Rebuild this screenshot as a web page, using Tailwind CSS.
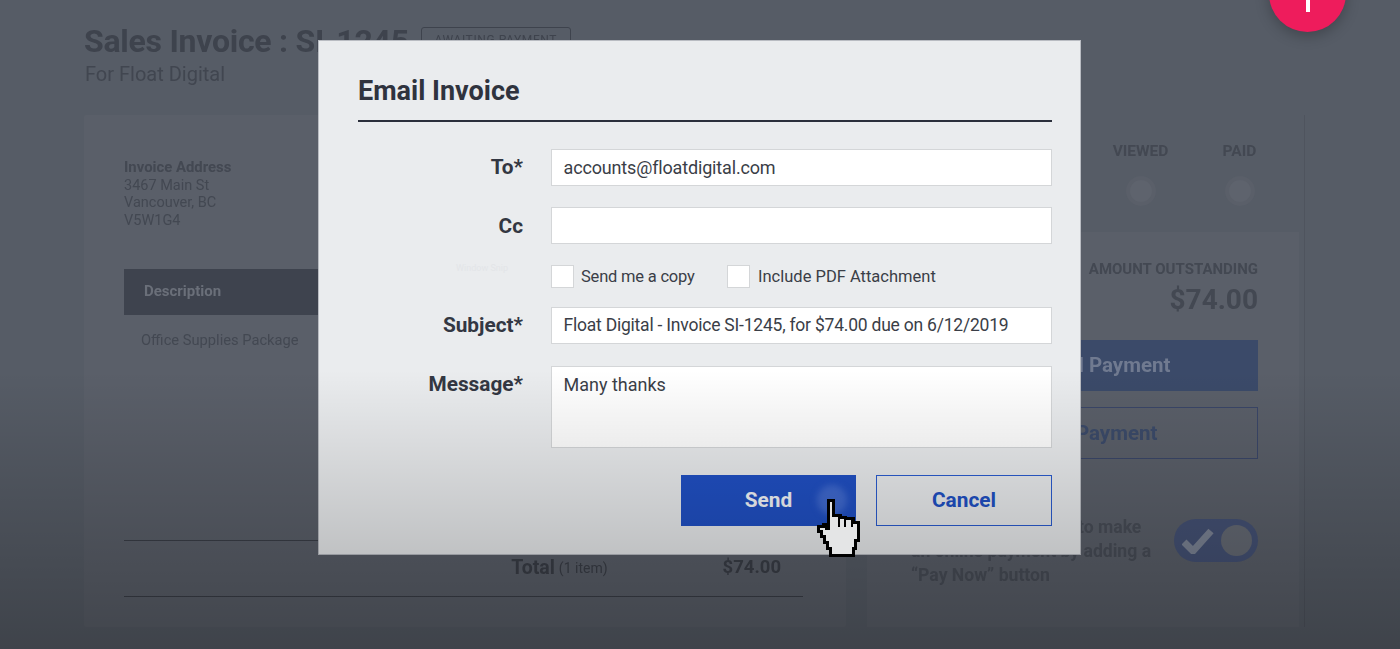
<!doctype html>
<html lang="en">
<head>
<meta charset="utf-8">
<title>Email Invoice</title>
<script src="https://cdn.jsdelivr.net/npm/@tailwindcss/browser@4"></script>
</head>
<body class="m-0">
<div class="relative w-[1400px] h-[649px] overflow-hidden bg-[#565c66] font-['Roboto',sans-serif]">

  <!-- Page behind the dialog -->
  <div class="h-full flex flex-col pl-[84px] blur-[0.5px]">
    <div class="h-[115px] pt-[23px]">
      <div class="flex items-start">
        <h1 class="text-[32px] leading-[36px] font-bold text-[#3e434d] tracking-[-0.26px]">Sales Invoice : SI-1245</h1>
        <span class="ml-[12px] mt-[4px] w-[150px] h-[26px] rounded-[3px] border border-[#3e434d] text-[12px] leading-[24px] text-center tracking-[0.6px] text-[#3e434d]">AWAITING PAYMENT</span>
      </div>
      <p class="text-[20px] leading-[24px] text-[#414650] ml-[1px] mt-[3px]">For Float Digital</p>
    </div>
    <div class="flex h-[512px]">
      <!-- Invoice card -->
      <section class="w-[762px] h-full flex flex-col bg-[#5a5f69] pl-[40px] pr-[43px] pb-[30px] rounded-[2px]">
        <div class="pt-[44px] text-[14.5px] leading-[17.5px] text-[#434852]">
          <p class="font-bold text-[14.9px]">Invoice Address</p>
          <p>3467 Main St</p>
          <p>Vancouver, BC</p>
          <p>V5W1G4</p>
        </div>
        <div class="mt-[40px] h-[46px] bg-[#3e434e] px-[20px] pb-[2px] flex items-center text-[15px] font-bold text-[#6a6f79]">Description</div>
        <p class="mt-[15px] ml-[17px] text-[14.7px] leading-[20px] text-[#434852]">Office Supplies Package</p>
        <div class="mt-auto border-t border-[#3a3e47] h-[56px] pb-[2px] flex items-center justify-end pr-[22px] text-[#3a3e47]">
          <span class="text-[19.5px] font-bold">Total</span>
          <span class="text-[14px] ml-[4px] mt-[2px]">(1 item)</span>
          <span class="ml-[115px] text-[18.5px] font-bold">$74.00</span>
        </div>
        <div class="border-t border-[#3a3e47]"></div>
      </section>

      <!-- Status and payment card -->
      <section class="ml-[21px] w-[438px] h-full flex flex-col border-r border-[#4f545e]">
        <div class="h-[117px] flex justify-end pr-[15px] pt-[28px]">
          <div class="w-[99px] flex flex-col items-center text-[15.5px] leading-[16px] font-bold text-[#434852]">
            <span>VIEWED</span>
            <span class="mt-[17px] w-[30px] h-[30px] rounded-full border-[4px] border-[#5a5f69] bg-[#5e636d]"></span>
          </div>
          <div class="w-[99px] flex flex-col items-center text-[15.5px] leading-[16px] font-bold text-[#434852]">
            <span>PAID</span>
            <span class="mt-[17px] w-[30px] h-[30px] rounded-full border-[4px] border-[#5a5f69] bg-[#5e636d]"></span>
          </div>
        </div>
        <div class="flex-1 mr-[5px] bg-[#5a5f69] pl-[44px] pr-[41px] pt-[27px]">
          <div class="text-right text-[#434852]">
            <p class="text-[15px] leading-[20px] font-bold">AMOUNT OUTSTANDING</p>
            <p class="text-[28px] leading-[40px] font-bold mt-[1px]">$74.00</p>
          </div>
          <div class="mt-[20px] h-[51px] bg-[#3b4a69] pl-[10px] flex items-center justify-center text-[20.5px] font-bold text-[#707a90]">Add Full Payment</div>
          <div class="mt-[16px] h-[52px] border border-[#3a4668] pr-[6px] flex items-center justify-center text-[20.5px] font-bold text-[#3b4a69]">Record Payment</div>
          <div class="mt-[56px] flex items-start justify-between">
            <p class="whitespace-nowrap text-[17.6px] leading-[24px] font-bold text-[#484d57]">Allow your customer to make<br>an online payment by adding a<br>“Pay Now” button</p>
            <span class="mt-[4px] w-[84px] h-[43px] rounded-full bg-[#445174] flex items-center justify-between pl-[8px] pr-[6px]">
              <svg width="32" height="26" viewBox="0 0 32 26" fill="none"><path d="M2 14 L11 23 L29 3" stroke="#7b8394" stroke-width="7"/></svg>
              <span class="w-[31px] h-[31px] rounded-full bg-[#646973]"></span>
            </span>
          </div>
        </div>
      </section>
    </div>
  </div>

  <!-- Floating action button -->
  <div class="absolute left-[1269px] top-[-45px] w-[77px] h-[77px] rounded-full bg-[#ee1c5c] shadow-[0_4px_14px_rgba(0,0,0,0.25)] flex items-end justify-center pb-[20px]">
    <span class="w-[4px] h-[14px] bg-white"></span>
  </div>

  <!-- Email dialog -->
  <div class="absolute left-[318px] top-[40px] w-[763px] h-[515px] bg-[#eaecee] border border-[#b9bcc2] pl-[40px] pr-[28px] text-[#3a3e47]">
    <h2 class="h-[81px] pt-[32px] text-[27px] leading-[36px] font-bold text-[#2f333e] border-b-2 border-[#2b2f3b] -ml-[1px]">Email Invoice</h2>

    <div class="mt-[27px] grid grid-cols-[164px_501px] gap-x-[28px]">
      <label class="h-[37px] text-right text-[20.8px] leading-[37px] font-bold text-[#333742]">To*</label>
      <div class="h-[37px] bg-white border border-[#d4d6d8] pl-[11.5px] text-[18px] tracking-[-0.16px] leading-[35px]">accounts@floatdigital.com</div>

      <label class="mt-[21px] h-[37px] text-right text-[20.8px] leading-[39px] font-bold text-[#333742]">Cc</label>
      <div class="mt-[21px] h-[37px] bg-white border border-[#d4d6d8]"></div>

      <div class="mt-[21px] h-[23px] text-right pr-[15px] text-[9px] leading-[6px] text-[#e3e5e8]">Window Snip</div>
      <div class="mt-[21px] h-[23px] flex items-start text-[16.5px] leading-[24px] text-[#3a3e47]">
        <span class="w-[23px] h-[23px] bg-white border border-[#d4d6d8]"></span>
        <span class="ml-[7px] w-[146px] tracking-[-0.2px]">Send me a copy</span>
        <span class="w-[23px] h-[23px] bg-white border border-[#d4d6d8]"></span>
        <span class="ml-[8px]">Include PDF Attachment</span>
      </div>

      <label class="mt-[19px] h-[37px] text-right text-[20.8px] leading-[37px] font-bold text-[#333742]">Subject*</label>
      <div class="mt-[19px] h-[37px] bg-white border border-[#d4d6d8] pl-[11.5px] text-[17.5px] tracking-[-0.22px] leading-[35px]">Float Digital - Invoice SI-1245, for $74.00 due on 6/12/2019</div>

      <label class="mt-[22px] h-[82px] text-right text-[20.8px] leading-[37px] font-bold text-[#333742]">Message*</label>
      <div class="mt-[22px] h-[82px] bg-white border border-[#d4d6d8] pl-[11.5px] text-[18px] leading-[35px]">Many thanks</div>
    </div>

    <div class="mt-[27px] ml-[322px] flex gap-[20px] w-[371px]">
      <button class="relative w-[175px] h-[51px] pt-[1px] bg-[#2050c4] text-[20.8px] font-bold text-[#f4f6fa] overflow-hidden">
        <span class="absolute left-[136px] top-[10px] w-[30px] h-[30px] rounded-full bg-[#3f69cf] blur-[3px]"></span>
        <span class="relative">Send</span>
      </button>
      <button class="w-[176px] h-[51px] pt-[1px] border border-[#2a5cd0] text-[20.8px] font-bold text-[#2050c4]">Cancel</button>
    </div>
  </div>

  <!-- Darkening toward the bottom of the frame -->
  <div class="absolute inset-0 pointer-events-none bg-linear-to-b from-transparent from-[57%] to-black/27"></div>

  <!-- Hand pointer -->
  <svg class="absolute left-[815px] top-[498px]" width="46" height="60" viewBox="0 0 46 60" fill="none" shape-rendering="crispEdges">
    <path d="M13 2 H18 V17 H25 V19 H30 V20 H38 V24 H43 V42 H40 V50 H38 V57 H15 V50 H12 V44 H9 V38 H6 V33 H3 V28 H8 V26 H11 V30 H13 Z" fill="#e4e5e6" stroke="#000" stroke-width="3"/>
    <path d="M24 19 V29 M30 20 V29 M37 22 V29" stroke="#000" stroke-width="2"/>
  </svg>
</div>
</body>
</html>
